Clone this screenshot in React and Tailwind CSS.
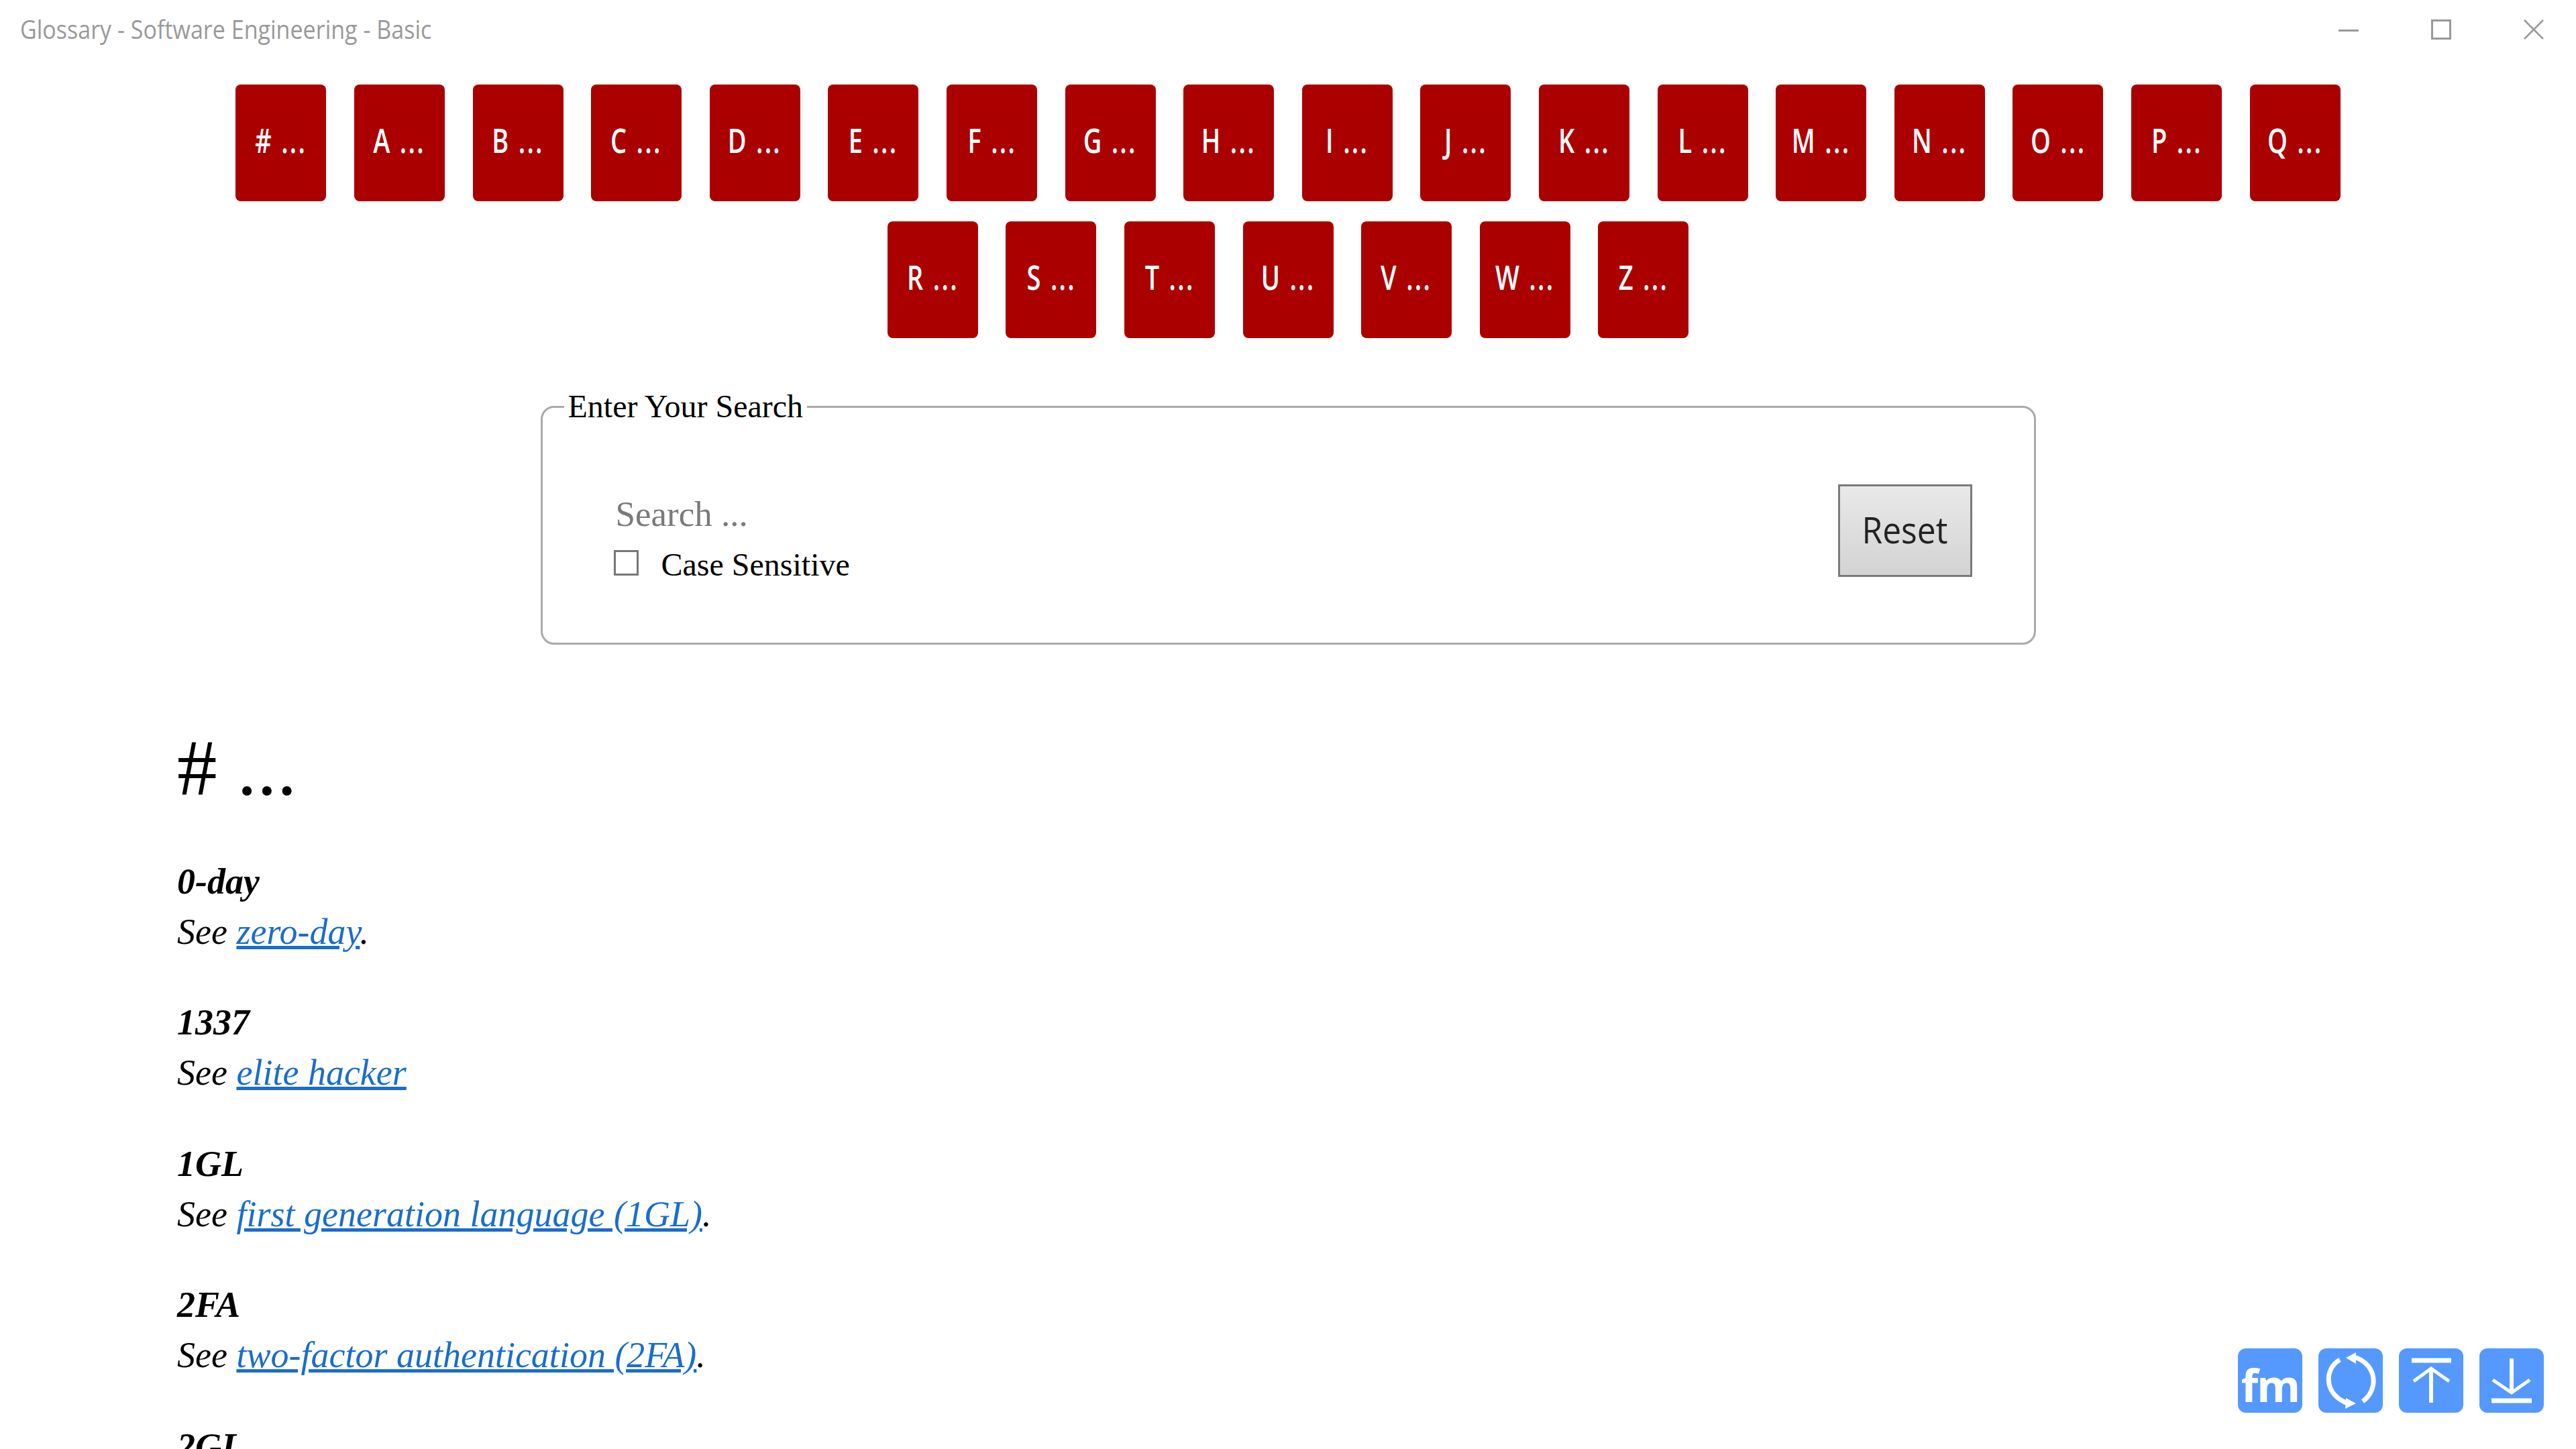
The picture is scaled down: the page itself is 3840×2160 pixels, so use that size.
const letters = ['#', 'A', 'B', 'C', 'D', 'E', 'F', 'G', 'H', 'I', 'J', 'K', 'L', 'M', 'N', 'O', 'P', 'Q', 'R', 'S', 'T', 'U', 'V', 'W', 'Z'];

const entries = [
  { term: '0-day', link: 'zero-day', end: '.' },
  { term: '1337', link: 'elite hacker', end: '' },
  { term: '1GL', link: 'first generation language (1GL)', end: '.' },
  { term: '2FA', link: 'two-factor authentication (2FA)', end: '.' },
  { term: '2GL' },
];

function TitleBar() {
  return (
    <div className="flex h-[88px] items-center justify-between pl-[30px] pr-[48px]">
      <span className="-mt-[4px] inline-block origin-left scale-x-[0.873] whitespace-nowrap font-['Open_Sans',sans-serif] text-[39px] leading-none text-[#999999]">
        Glossary - Software Engineering - Basic
      </span>
      <div className="flex items-center gap-[108px]">
        <svg width="30" height="30" viewBox="0 0 30 30" fill="none" stroke="#999999" strokeWidth="3">
          <path d="M0 16.5H30" />
        </svg>
        <svg width="30" height="30" viewBox="0 0 30 30" fill="none" stroke="#999999" strokeWidth="3">
          <path d="M1.5 1.5H28.5V28.5H1.5Z" />
        </svg>
        <svg width="30" height="30" viewBox="0 0 30 30" fill="none" stroke="#999999" strokeWidth="2.5">
          <path d="M1 1L29 29M29 1L1 29" />
        </svg>
      </div>
    </div>
  );
}

function LetterNav() {
  return (
    <div className="mx-auto mt-[38px] flex w-[3300px] flex-wrap justify-center gap-x-[41.6px] gap-y-[30px]">
      {letters.map((l) => (
        <a
          key={l}
          href="#"
          className="flex h-[174px] w-[135px] items-center justify-center rounded-[8px] bg-[#aa0000] pb-[8px] font-['Open_Sans',sans-serif] text-[50px] font-semibold leading-none tracking-[3px] text-white"
        >
          <span className="inline-block scale-x-[0.76] whitespace-nowrap">{l} ...</span>
        </a>
      ))}
    </div>
  );
}

function SearchBox() {
  return (
    <fieldset className="mx-auto mt-[76px] h-[381px] w-[2229px] rounded-[20px] border-[3px] border-[#aaaaaa]">
      <legend className="ml-[32px] px-[6px] font-['Liberation_Serif',serif] text-[48px] leading-[52px] text-black">
        Enter Your Search
      </legend>
      <div className="mt-[90px] flex items-start justify-between pl-[106px] pr-[92px]">
        <div className="flex flex-col pt-[10px]">
          <input
            placeholder="Search ..."
            className="h-[70px] w-[1600px] pl-[3px] font-['Liberation_Serif',serif] text-[53px] outline-none placeholder:text-[#7a7a7a]"
          />
          <label className="mt-[12px] flex items-center font-['Liberation_Serif',serif] text-[48px] leading-[56px] text-black">
            <span className="-mt-[6px] h-[38px] w-[37px] border-[3px] border-[#777777] bg-white" />
            <span className="ml-[34px]">Case Sensitive</span>
          </label>
        </div>
        <button className="h-[138px] w-[200px] border-[3px] border-[#7a7a7a] bg-gradient-to-b from-[#e9e9e9] to-[#d3d3d3] pb-[4px] font-['Open_Sans',sans-serif] text-[54px] font-medium text-[#222222]">
          <span className="inline-block scale-x-[0.92]">Reset</span>
        </button>
      </div>
    </fieldset>
  );
}

function Glossary() {
  return (
    <div className="mt-[118px] pl-[264px] font-['Liberation_Serif',serif] text-black">
      <h1 className="text-[119px] leading-[130px]"># ...</h1>
      <dl className="mt-[68px] text-[54px] italic leading-[75px]">
        {entries.map((e) => (
          <div key={e.term} className="mb-[60.4px]">
            <dt className="font-bold">{e.term}</dt>
            {e.link && (
              <dd>
                See <a href="#" className="text-[#1a6dcc] underline">{e.link}</a>{e.end}
              </dd>
            )}
          </div>
        ))}
      </dl>
    </div>
  );
}

function FloatingButtons() {
  const box = 'flex h-[96px] w-[96px] items-center justify-center rounded-[12px] bg-[#5599ff]';
  return (
    <div className="fixed bottom-[54px] right-[48px] flex gap-[24px]">
      <div className={box}>
        <span className="mt-[12px] font-['Open_Sans',sans-serif] text-[66px] font-bold leading-none tracking-[-2px] text-white">fm</span>
      </div>
      <div className={box}>
        <svg width="96" height="96" viewBox="0 0 96 96" fill="none" stroke="white" strokeWidth="7">
          <path d="M32 17C8 30 8 70 44 82" />
          <path d="M66 79C90 62 88 24 54 13" />
          <path d="M56 82L41 74L40 90Z" fill="white" stroke="none" />
          <path d="M41 14L56 6L56 23Z" fill="white" stroke="none" />
        </svg>
      </div>
      <div className={box}>
        <svg width="96" height="96" viewBox="0 0 96 96" fill="none" stroke="white">
          <path d="M19 18H78" strokeWidth="7" />
          <path d="M48 31V81" strokeWidth="6" />
          <path d="M22 49L48 30L75 49" strokeWidth="5" />
        </svg>
      </div>
      <div className={box}>
        <svg width="96" height="96" viewBox="0 0 96 96" fill="none" stroke="white">
          <path d="M48 15V65" strokeWidth="6" />
          <path d="M20 47L48 66L75 47" strokeWidth="5" />
          <path d="M18 78H78" strokeWidth="7" />
        </svg>
      </div>
    </div>
  );
}

export default function App() {
  return (
    <div className="h-screen overflow-hidden bg-white">
      <TitleBar />
      <LetterNav />
      <SearchBox />
      <Glossary />
      <FloatingButtons />
    </div>
  );
}
